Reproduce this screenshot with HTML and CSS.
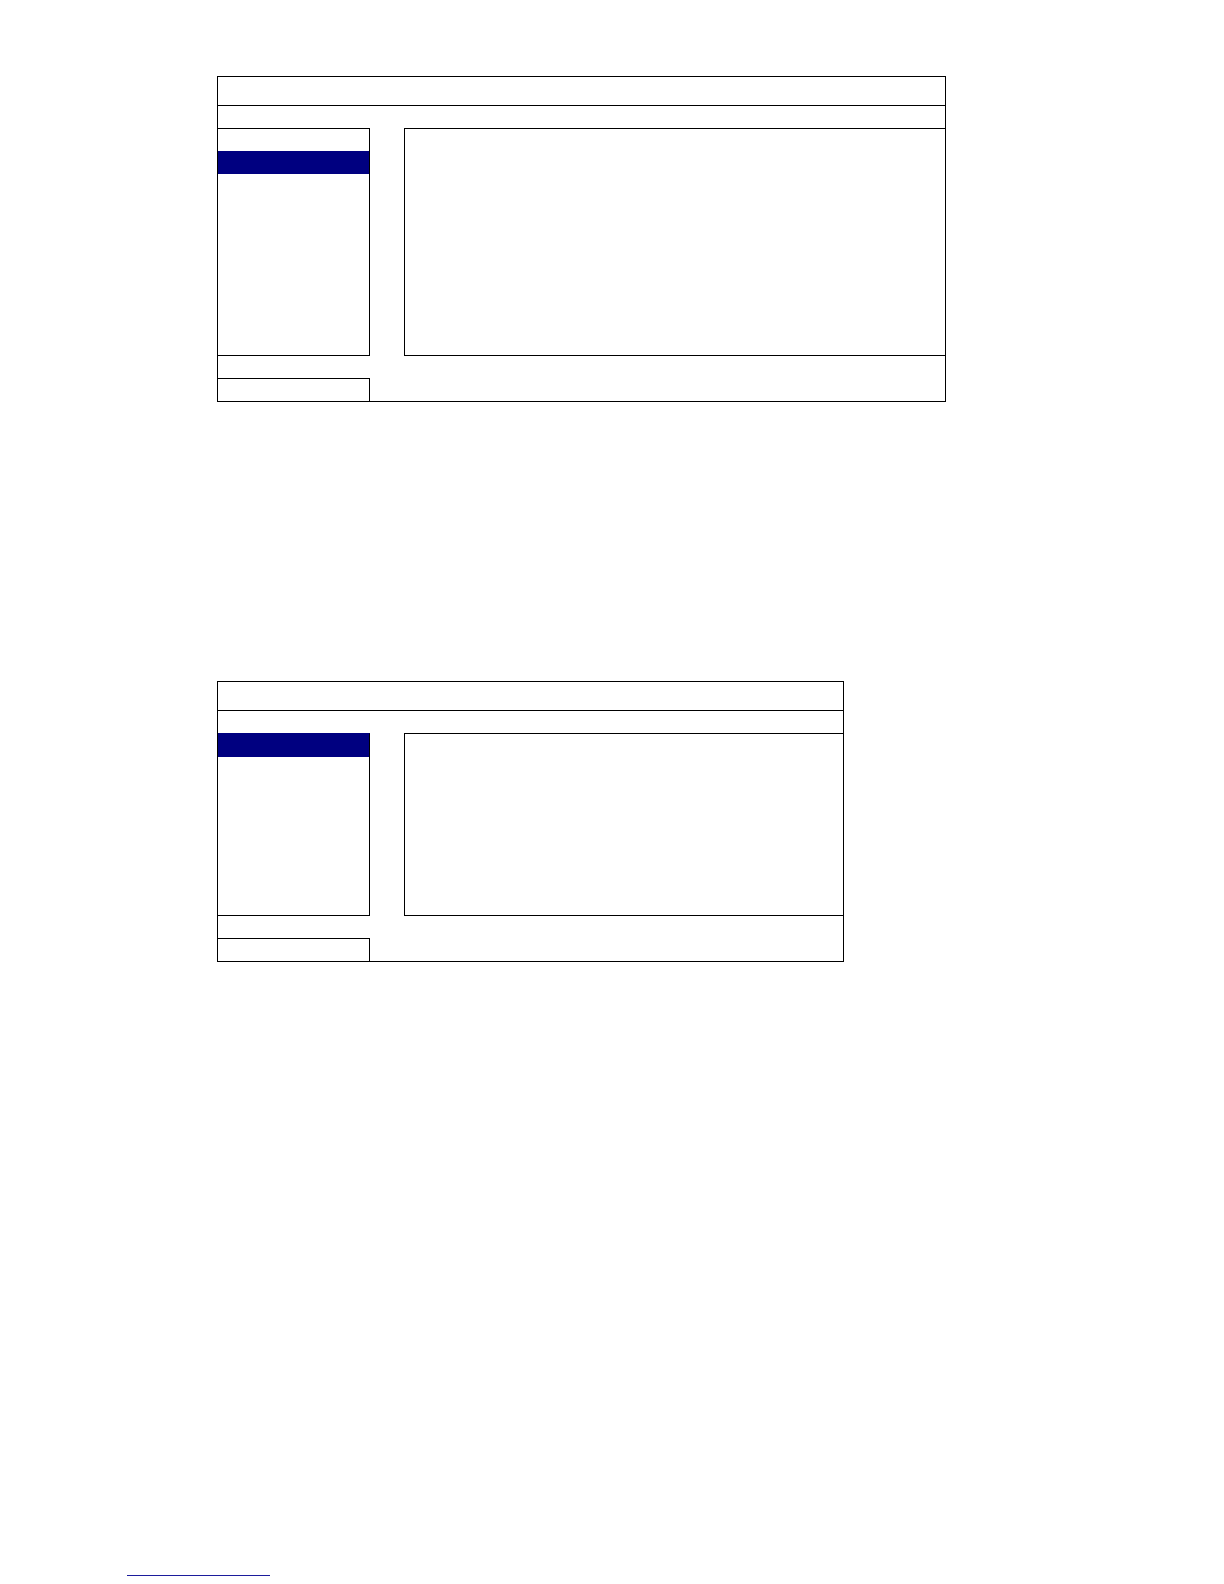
FILE: index.html
```html
<!DOCTYPE html>
<html lang="en">
<head>
<meta charset="utf-8">
<title>Menu layouts</title>
<link rel="stylesheet" href="styles.css">
</head>
<body>
<div class="page">
  <div class="menu menu-wide">
    <div class="menu-head"></div>
    <div class="menu-strip"></div>
    <div class="menu-panels tall">
      <div class="menu-side">
        <div class="side-item"></div>
        <div class="side-item active"></div>
      </div>
      <div class="menu-spacer"></div>
      <div class="menu-main"></div>
    </div>
    <div class="menu-strip"></div>
    <div class="menu-foot">
      <div class="foot-button"></div>
    </div>
  </div>

  <div class="menu menu-narrow">
    <div class="menu-head"></div>
    <div class="menu-strip"></div>
    <div class="menu-panels short">
      <div class="menu-side top-active">
        <div class="side-item active"></div>
      </div>
      <div class="menu-spacer"></div>
      <div class="menu-main"></div>
    </div>
    <div class="menu-strip"></div>
    <div class="menu-foot">
      <div class="foot-button"></div>
    </div>
  </div>

  <div class="footnote-rule"></div>
</div>
</body>
</html>
```

FILE: styles.css
```css
html, body {
  margin: 0;
  padding: 0;
  background: #ffffff;
  font-family: "Liberation Sans", Arial, sans-serif;
}

.page {
  display: flex;
  flex-direction: column;
  align-items: flex-start;
  padding-top: 76px;
  padding-left: 217px;
  height: 1584px;
  box-sizing: border-box;
}

.menu {
  box-sizing: border-box;
  border: 1px solid #000;
  display: flex;
  flex-direction: column;
}

.menu-wide {
  width: 729px;
}

.menu-narrow {
  width: 627px;
  margin-top: 279px;
}

.menu-head {
  height: 28px;
  border-bottom: 1px solid #000;
}

.menu-strip {
  height: 22px;
}

.menu-panels {
  display: flex;
  flex-direction: row;
}

.menu-panels.tall {
  height: 228px;
}

.menu-panels.short {
  height: 183px;
}

.menu-side {
  box-sizing: border-box;
  width: 152px;
  border-top: 1px solid #000;
  border-right: 1px solid #000;
  border-bottom: 1px solid #000;
  display: flex;
  flex-direction: column;
}

.menu-side.top-active {
  border-top-color: #000080;
}

.side-item {
  height: 22px;
}

.side-item.active {
  height: 23px;
  background: #000080;
}

.menu-spacer {
  width: 34px;
}

.menu-main {
  box-sizing: border-box;
  flex: 1;
  border-top: 1px solid #000;
  border-left: 1px solid #000;
  border-bottom: 1px solid #000;
}

.menu-foot {
  display: flex;
}

.foot-button {
  box-sizing: border-box;
  width: 152px;
  height: 23px;
  border-top: 1px solid #000;
  border-right: 1px solid #000;
}

.footnote-rule {
  margin-top: 613px;
  margin-left: -90px;
  width: 143px;
  height: 0;
  border-top: 1px solid #1c1c9c;
}
```
